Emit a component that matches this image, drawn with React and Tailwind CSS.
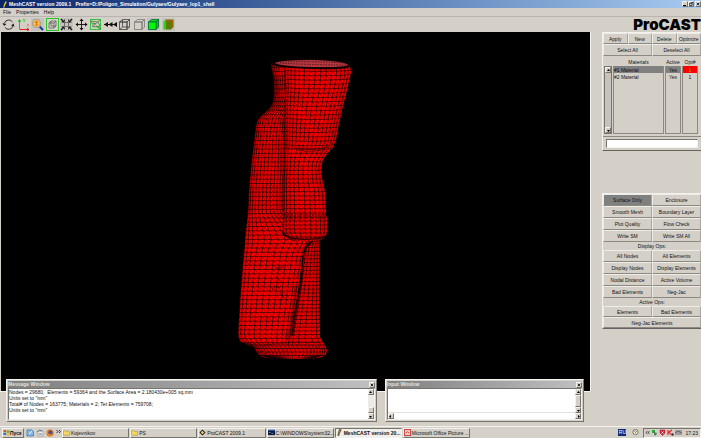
import React, { useState } from 'react';

const raised = 'border border-t-[#f4f2ee] border-l-[#f4f2ee] border-r-[#77746e] border-b-[#77746e] bg-[#d4d0c8]';
const sunken = 'border border-t-[#77746e] border-l-[#77746e] border-r-[#f4f2ee] border-b-[#f4f2ee]';

// Each part is a list of [y, left, right] profiles, top to bottom
const BODY = [
	[63, 271, 296], [70, 272, 296], [80, 274, 296], [92, 274, 294], [102, 273, 292], [109, 269, 290],
	[114, 263, 288], [119, 258, 287], [126, 256, 286], [142, 254, 285], [166, 251, 285], [190, 249, 284],
	[212, 248, 284], [238, 245, 312], [243, 245, 310], [252, 244, 305], [275, 242, 301], [300, 240, 298],
	[318, 239, 295], [335, 238, 293], [341, 240, 292], [347, 252, 290],
];
const HEAD = [
	[66, 286, 350], [72, 285, 351], [86, 286, 348], [110, 285, 342], [128, 285, 338], [140, 285, 336], [149, 285, 332],
];
const FACE = [
	[149, 285, 331], [154, 285, 327], [160, 285, 323], [168, 285, 321], [178, 284, 322], [192, 284, 325], [213, 284, 326],
];
const CHIN = [
	[213, 285, 325], [218, 284, 327], [226, 283, 327], [233, 284, 327], [237, 287, 325], [241, 293, 318],
];
const LEG = [
	[240, 310, 319], [247, 305, 319], [258, 303, 319], [280, 300, 319], [305, 296, 319], [330, 291, 320], [337, 290, 320], [346, 288, 325],
];
const BASE = [
	[345, 250, 325], [347, 254, 326], [351, 256, 327], [354, 258, 326], [357, 262, 322], [359, 276, 310],
];

function profileAt(part, y) {
	for (let i = 1; i < part.length; i++) {
		const [y0, l0, r0] = part[i - 1];
		const [y1, l1, r1] = part[i];
		if (y <= y1) {
			const t = (y - y0) / (y1 - y0);
			return [l0 + (l1 - l0) * t, r0 + (r1 - r0) * t];
		}
	}
	const last = part[part.length - 1];
	return [last[1], last[2]];
}

function outline(part) {
	const left = part.map(([y, l]) => `${l},${y}`);
	const right = part.map(([y, , r]) => `${r},${y}`).reverse();
	return left.concat(right).join(' ');
}

function meshPaths(part, cols, step, sag) {
	const top = part[0][0];
	const bottom = part[part.length - 1][0];
	const count = Math.max(1, Math.round((bottom - top) / step));
	const grid = [];
	for (let r = 0; r <= count; r++) {
		const y = top + ((bottom - top) * r) / count;
		const [l, right] = profileAt(part, y);
		const row = [];
		for (let c = 0; c <= cols; c++) {
			const u = c / cols;
			// columns crowd together towards the silhouette
			const w = 0.5 * u + 0.25 * (1 - Math.cos(Math.PI * u));
			row.push([l + (right - l) * w, y + sag * Math.sin(Math.PI * u)]);
		}
		grid.push(row);
	}
	const line = (a, b) => `M${a[0].toFixed(1)} ${a[1].toFixed(1)}L${b[0].toFixed(1)} ${b[1].toFixed(1)}`;
	let quads = '';
	let diagonals = '';
	for (let r = 0; r < count; r++) {
		for (let c = 0; c < cols; c++) {
			quads += line(grid[r][c], grid[r][c + 1]);
			quads += line(grid[r][c], grid[r + 1][c]);
			diagonals += line(grid[r][c], grid[r + 1][c + 1]);
		}
	}
	return { quads, diagonals };
}

function MeshPart({ part, cols, step, sag = 0, fill = '#ff0000' }) {
	const { quads, diagonals } = meshPaths(part, cols, step, sag);
	return (
		<g fill="none" stroke="#000">
			<polygon points={outline(part)} fill={fill} stroke="none" />
			<path d={quads} strokeWidth="0.7" strokeOpacity="0.85" />
			<path d={diagonals} strokeWidth="0.5" strokeOpacity="0.55" />
		</g>
	);
}

function Model() {
	return (
		<svg viewBox="230 50 130 320" className="absolute left-[229px] top-[18px] h-[320px] w-[130px]" role="img" aria-label="Surface mesh">
			<MeshPart part={BODY} cols={12} step={4.3} />
			<MeshPart part={LEG} cols={6} step={3.8} fill="#f80000" />
			<MeshPart part={HEAD} cols={15} step={4.3} sag={1} />
			<MeshPart part={FACE} cols={10} step={4.3} />
			<MeshPart part={CHIN} cols={10} step={3.8} fill="#f80000" />
			<MeshPart part={BASE} cols={22} step={3.2} fill="#f80000" />
			<g fill="none" stroke="#000">
				<path d="M274 78Q281 92 279 108M283 76Q288 92 285 118M279 110Q284 120 282 135" strokeWidth="0.8" strokeOpacity="0.5" strokeDasharray="1 1" />
				<path d="M284 119Q286 180 283 236" strokeWidth="0.8" strokeOpacity="0.5" />
				<path d="M294 148Q312 151 328 147M298 150Q312 153 326 149" strokeWidth="0.8" strokeOpacity="0.6" />
				<path d="M285 215H326M285 218H326" strokeWidth="1" strokeOpacity="0.6" strokeDasharray="2 1" />
				<path d="M282 232Q287 239 300 239Q315 240 326 236" strokeWidth="1.6" strokeOpacity="0.7" />
				<path d="M313 241Q305 246 303 256Q302 275 299 292" strokeWidth="1.4" />
				<path d="M302 270Q300 290 297 304Q294 320 292 336" strokeWidth="2" strokeOpacity="0.7" />
				<path d="M296 286Q293 310 288 340" strokeWidth="2.4" strokeOpacity="0.25" />
				<path d="M275 268h6l3 -2M272 290l4 -4 4 2M279 302l3 -4 1 -6M276 276l4 6M280 292l4 6" strokeWidth="1" strokeOpacity="0.6" />
				<path d="M247 343Q255 346 262 352M262 346Q290 340 320 343" strokeWidth="0.8" strokeOpacity="0.4" />
			</g>
			<path d="M271 64Q273 60 312 59Q348 60 351 66Q350 70 312 69Q275 68 271 64Z" fill="#150000" />
			<path d="M275 63Q280 60 312 60Q344 61 348 65Q346 67.500 312 67Q280 66 275 63Z" fill="#b83840" />
			<path d="M277 63Q312 65 347 65M280 62Q312 61 343 63" stroke="#401018" strokeWidth="0.9" strokeDasharray="1.500 1.200" fill="none" />
		</svg>
	);
}

function Cube({ face = 'none', side = 'none', top = 'none', stroke = '#444', hidden }) {
	return (
		<g stroke={stroke} strokeWidth="0.8">
			<path d="M1.500 4L4.500 1.500H11.500L9 4Z" fill={top} />
			<path d="M9 4L11.500 1.500V9L9 11.500Z" fill={side} />
			<path d="M1.500 4H9V11.500H1.500Z" fill={face} />
			{hidden && <path d="M4.500 1.500V9H11.500M4.500 9L1.500 11.500" fill="none" />}
		</g>
	);
}

const TOOLS = [
	{
		label: 'Rotate',
		icon: (
			<g fill="none" stroke="#333" strokeWidth="1">
				<path d="M2.500 5A4.500 4.500 0 0 1 10.500 4M11 8A4.500 4.500 0 0 1 3 9.500" />
				<path d="M0.500 5L2 8L4.500 6ZM9 7.500L11.500 5.500L12.500 8.500Z" fill="#222" stroke="none" />
			</g>
		),
	},
	{
		label: 'Axes',
		icon: (
			<g fill="none" strokeWidth="1">
				<path d="M2.500 2V11M1 4L2.500 1.500L4 4" stroke="#18c818" />
				<path d="M2.500 11.500H12M10 10L12 11.500L10 13" stroke="#e02020" />
				<path d="M6 1l1.200 1.500L8.500 1M7.200 2.500V4" stroke="#18c818" strokeWidth="0.8" />
				<path d="M10 6l2 2.500M12 6l-2 2.500" stroke="#e87070" strokeWidth="0.7" />
			</g>
		),
	},
	{
		label: 'Zoom',
		shade: true,
		icon: (
			<g>
				<path d="M8.500 8.500L12 12" stroke="#2038a0" strokeWidth="2" />
				<circle cx="5.500" cy="5.500" r="4" fill="#f8c050" stroke="#a8a098" strokeWidth="1.200" />
				<path d="M5.500 3V8M4 5L5.500 3L7 5M4 6.500L5.500 8L7 6.500" stroke="#e07810" strokeWidth="1" fill="none" />
			</g>
		),
	},
	{
		label: 'Zoom box',
		icon: (
			<g fill="none">
				<rect x="0.500" y="0.500" width="12" height="12" stroke="#28c828" />
				<path d="M3 5H8V10H3ZM3 5L5 3H10V8L8 10M8 5L10 3M5 3V8H10" stroke="#555" strokeWidth="0.7" />
			</g>
		),
	},
	{
		label: 'Fit',
		shade: true,
		icon: (
			<g stroke="#111" fill="none">
				<rect x="4.500" y="4.500" width="4" height="4" stroke="#555" strokeWidth="0.8" />
				<path d="M1 1L4 4M12 1L9 4M1 12L4 9M12 12L9 9" strokeWidth="1.300" />
				<path d="M4.500 1.500L4 4H1.500M8.500 1.500L9 4H11.500M4.500 11.500L4 9H1.500M8.500 11.500L9 9H11.500" strokeWidth="0.900" />
			</g>
		),
	},
	{
		label: 'Pan',
		icon: (
			<g stroke="#111" fill="#111">
				<path d="M6.500 2V11M2 6.500H11" strokeWidth="0.9" />
				<path d="M6.500 0.500L8.500 3H4.500ZM6.500 12.500L8.500 10H4.500ZM0.500 6.500L3 4.500V8.500ZM12.500 6.500L10 4.500V8.500Z" stroke="none" />
			</g>
		),
	},
	{
		label: 'Restore',
		icon: (
			<g fill="none">
				<rect x="1.500" y="1.500" width="10" height="10" stroke="#38c038" />
				<path d="M2 3L9 4L11 8L5 9ZM3 9L11 2" stroke="#507050" strokeWidth="0.8" />
				<path d="M7 8l5 3M4 5l3 1" stroke="#28a028" strokeWidth="1.300" />
			</g>
		),
	},
	{ label: 'Previous', icon: <path d="M0 6.500L4 4V9ZM4.500 6.500L8.500 4V9ZM9 6.500L13 4V9ZM0 6H13V7H0Z" fill="#111" /> },
	{ label: 'Wireframe', icon: <Cube hidden /> },
	{ label: 'Hidden line', icon: <Cube stroke="#777" /> },
	{ label: 'Solid mesh', shade: true, icon: <Cube face="#00f800" side="#00d000" top="#10e010" stroke="#064" /> },
	{
		label: 'Solid',
		shade: true,
		icon: (
			<g>
				<path d="M1.500 4L4 1.500H11.500V9L9 11.500Z" fill="#8a6a00" />
				<path d="M4 4H9V11.500H4Z" fill="#5c7a00" />
				<path d="M1.500 4L4 1.500V4V11.500H1.500Z" fill="#28d800" />
			</g>
		),
	},
];

function Toolbar() {
	return (
		<div className="flex h-[15px] w-[175px] shrink-0 items-center justify-between pl-[2px]">
			{TOOLS.map((tool) => (
				<button key={tool.label} type="button" aria-label={tool.label} className={tool.shade ? 'bg-[#c4c2be]' : ''}>
					<svg viewBox="0 0 13 13" className="block size-[13px]">{tool.icon}</svg>
				</button>
			))}
		</div>
	);
}

function ScrollButton({ dir }) {
	const paths = { up: 'M1 3L2.500 1L4 3Z', down: 'M1 2L2.500 4L4 2Z', left: 'M3 1L1 2.500L3 4Z', right: 'M2 1L4 2.500L2 4Z' };
	return (
		<button type="button" aria-label={`Scroll ${dir}`} className={`${raised} flex size-[6px] shrink-0 items-center justify-center`}>
			<svg viewBox="0 0 5 5" className="size-[5px] shrink-0"><path d={paths[dir]} fill="#000" /></svg>
		</button>
	);
}

function CloseButton({ className = '' }) {
	return (
		<button type="button" aria-label="Close" className={`${raised} flex size-[6px] items-center justify-center ${className}`}>
			<svg viewBox="0 0 5 5" className="size-[4px] shrink-0"><path d="M1 1L4 4M4 1L1 4" stroke="#000" /></svg>
		</button>
	);
}

function OpButton({ children, active, onClick, className = '' }) {
	return (
		<button
			type="button"
			onClick={onClick}
			className={`h-full min-w-0 overflow-hidden whitespace-nowrap border border-l-[#eeece6] border-t-[#eeece6] border-b-[#8c8982] border-r-[#a9a69f] text-center ${active ? 'bg-[#808080]' : 'bg-[#d4d0c8]'} ${className}`}
		>
			{children}
		</button>
	);
}

function MaterialsPanel() {
	const [selected, setSelected] = useState(1);
	const materials = [{ id: 1, name: '#1 Material' }, { id: 2, name: '#2 Material' }];

	return (
		<section className="border border-b-[#66635e] border-l-[#f4f2ee] border-r-0 border-t-[#f4f2ee]">
			<div className="grid h-[11px] grid-cols-4">
				{['Apply', 'New', 'Delete', 'Optimize'].map((name) => <OpButton key={name}>{name}</OpButton>)}
			</div>
			<div className="grid h-[12px] grid-cols-2">
				<OpButton>Select All</OpButton>
				<OpButton>Deselect All</OpButton>
			</div>
			<div className="flex pl-px pr-[2px] pt-[2px]">
				<div className="mt-[8px] flex h-[68px] flex-col justify-between border border-[#77746e] bg-[#c6c3bc]">
					<ScrollButton dir="up" />
					<ScrollButton dir="down" />
				</div>
				<table className="min-w-0 flex-1 table-fixed border-separate border-spacing-x-[1px] border-spacing-y-0">
					<thead>
						<tr className="h-[8px]">
							<th className="p-0 font-normal">Materials</th>
							<th className="w-[16px] p-0 font-normal">Active</th>
							<th className="w-[16px] p-0 font-normal">Opt#</th>
						</tr>
					</thead>
					<tbody>
						{materials.map((material) => {
							const isSelected = material.id === selected;
							return (
								<tr key={material.id} className="h-[7px]" onClick={() => setSelected(material.id)}>
									<td className={`border-x border-[#8c8982] p-0 ${isSelected ? 'bg-[#808080]' : ''}`}>{material.name}</td>
									<td className={`border-x border-[#8c8982] p-0 text-center ${isSelected ? 'bg-[#808080]' : ''}`}>Yes</td>
									<td className={`border-x border-[#8c8982] p-0 text-center ${isSelected ? 'bg-[#ff0000] text-[#c0a000]' : ''}`}>1</td>
								</tr>
							);
						})}
						<tr className="h-[54px]">
							<td className="border border-t-0 border-[#8c8982] p-0" />
							<td className="border border-t-0 border-[#8c8982] p-0" />
							<td className="border border-t-0 border-[#8c8982] p-0" />
						</tr>
					</tbody>
				</table>
			</div>
			<div className="mt-[2px] border-t border-[#8c8982] px-[3px] py-[2px]">
				<input aria-label="Material name" className={`${sunken} block h-[9px] w-full bg-white px-px outline-none`} />
			</div>
		</section>
	);
}

function OperationsPanel() {
	const [mode, setMode] = useState('Surface Only');
	const mesh = ['Surface Only', 'Enclosure', 'Smooth Mesh', 'Boundary Layer', 'Plot Quality', 'Flow Check', 'Write SM', 'Write SM All'];
	const display = ['All Nodes', 'All Elements', 'Display Nodes', 'Display Elements', 'Nodal Distance', 'Active Volume', 'Bad Elements', 'Neg-Jac'];

	return (
		<section className="border border-b-[#66635e] border-l-[#f4f2ee] border-r-0 border-t-[#f4f2ee]">
			<div className="grid auto-rows-[minmax(12px,auto)] grid-cols-2">
				{mesh.map((name) => (
					<OpButton key={name} active={mode === name} onClick={() => setMode(name)}>{name}</OpButton>
				))}
			</div>
			<h2 className="h-[8px] text-center leading-[8px]">Display Ops:</h2>
			<div className="grid auto-rows-[minmax(12px,auto)] grid-cols-2">
				{display.map((name) => <OpButton key={name}>{name}</OpButton>)}
			</div>
			<h2 className="h-[8px] text-center leading-[8px]">Active Ops:</h2>
			<div className="grid auto-rows-[minmax(11px,auto)] grid-cols-2">
				<OpButton>Elements</OpButton>
				<OpButton>Bad Elements</OpButton>
				<OpButton className="col-span-2">Neg-Jac Elements</OpButton>
			</div>
		</section>
	);
}

function ToolWindow({ title, className, children }) {
	return (
		<section className={`${raised} flex h-[43px] min-w-0 flex-col p-px ${className}`}>
			<header className="flex h-[7px] shrink-0 items-center justify-between bg-linear-to-r from-[#808080] to-[#c0c0c0] font-bold leading-[7px] text-[#e4e2dc]">
				<h2>{title}</h2>
				<CloseButton />
			</header>
			{children}
		</section>
	);
}

function MessageWindow() {
	return (
		<ToolWindow title="Message Window" className="flex-[372]">
			<div className={`${sunken} flex min-h-0 flex-1 bg-white`}>
				<div className="flex-1 overflow-hidden whitespace-pre leading-[6px]">
					<p>{'Nodes = 29680,  Elements = 59364 and the Surface Area = 2.180430e+005 sq.mm'}</p>
					<p>Units set to "mm"</p>
					<p>Total# of Nodes = 163775; Materials = 2; Tet Elements = 759708;</p>
					<p>Units set to "mm"</p>
				</div>
				<div className="flex flex-col bg-[#eceae6]">
					<ScrollButton dir="up" />
					<div className="flex-1" />
					<div className={`${raised} h-[6px] w-[6px]`} />
					<ScrollButton dir="down" />
				</div>
			</div>
		</ToolWindow>
	);
}

function InputWindow() {
	return (
		<ToolWindow title="Input Window" className="flex-[198]">
			<div className={`${sunken} flex min-h-0 flex-1 bg-white`}>
				<div className="flex min-w-0 flex-1 flex-col">
					<textarea aria-label="Input" className="min-h-0 w-full flex-1 resize-none overflow-hidden outline-none" />
					<div className="flex border-t border-[#e4e2dc]"><ScrollButton dir="left" /></div>
				</div>
				<div className="flex flex-col bg-[#eceae6]">
					<ScrollButton dir="up" />
					<div className={`${raised} w-[6px] flex-1`} />
					<ScrollButton dir="down" />
					<ScrollButton dir="right" />
				</div>
			</div>
		</ToolWindow>
	);
}

const folder = <path d="M0.500 2H3L4 3H7.500V7H0.500Z" fill="#f8d860" stroke="#b08820" strokeWidth="0.6" />;
const TASKS = [
	{ name: 'Kojevnikov', icon: folder },
	{ name: 'PS', icon: folder },
	{ name: 'ProCAST 2009.1', icon: <g><path d="M4 0.500L7.500 4L4 7.500L0.500 4Z" fill="#181818" /><path d="M4 2L6 4L4 6L2 4Z" fill="#f8c868" /></g> },
	{ name: 'C:\\WINDOWS\\system32...', icon: <g><rect x="0" y="1" width="8" height="6" fill="#0a1a40" /><path d="M0 1.500H8" stroke="#2878d0" /><path d="M1 4h2M4 5h2" stroke="#ccc" strokeWidth="0.7" /></g> },
	{ name: 'MeshCAST version 20...', active: true, icon: <path d="M4 0L6 1L4 5L3 8L2 7L3 3Z" fill="#a89010" stroke="#222" strokeWidth="0.6" /> },
	{ name: 'Microsoft Office Picture ...', icon: <g><rect x="0.500" y="0.500" width="7" height="7" fill="#f4c8c0" stroke="#c83838" /><path d="M2 5L4 3L6 5" stroke="#c83838" fill="none" /></g> },
];

function Taskbar() {
	return (
		<footer className="flex h-[12px] shrink-0 items-center border-t border-[#f4f2ee] bg-[#d4d0c8] pl-[2px]">
			<button type="button" className={`${raised} flex h-[10px] w-[22px] items-center font-bold`}>
				<svg viewBox="0 0 8 8" className="size-[7px] shrink-0">
					<path d="M0.500 1.500Q2 0.500 3.500 1.500V4Q2 3 0.500 4Z" fill="#e84820" />
					<path d="M4.200 1.500Q6 2.500 7.500 1.500V4Q6 5 4.200 4Z" fill="#58b030" />
					<path d="M0.500 4.700Q2 3.700 3.500 4.700V7Q2 6 0.500 7Z" fill="#2868d8" />
					<path d="M4.200 4.700Q6 5.700 7.500 4.700V7Q6 8 4.200 7Z" fill="#f0b818" />
				</svg>
				Пуск
			</button>
			<div className="flex w-[38px] shrink-0 items-center justify-between pl-[2px] pr-px">
				<svg viewBox="0 0 8 8" className="size-[8px]"><path d="M1 1H6L7.500 3V7H1Z" fill="#88b8e8" stroke="#3870b8" strokeWidth="0.7" /><path d="M3 5L6 2" stroke="#fff" /></svg>
				<svg viewBox="0 0 8 8" className="size-[8px]"><rect x="2" y="2" width="5" height="5" fill="#f4f4f4" stroke="#888" strokeWidth="0.6" /><path d="M1 3Q3 0 6 2M3 5H6" stroke="#487890" fill="none" /></svg>
				<svg viewBox="0 0 8 8" className="size-[8px]"><circle cx="4" cy="4" r="3.500" fill="#e06818" /><circle cx="4.500" cy="3.500" r="2" fill="#3858b0" /><path d="M1 2Q1 7 6 6" stroke="#f8a028" fill="none" /></svg>
				<svg viewBox="0 0 5 8" className="h-[8px] w-[5px]"><path d="M0.500 1L2 2.500L0.500 4M3 1L4.500 2.500L3 4" stroke="#111" strokeWidth="0.8" fill="none" /></svg>
			</div>
			<nav className="flex w-[408px] shrink gap-px">
				{TASKS.map((task) => (
					<button
						key={task.name}
						type="button"
						className={`flex h-[10px] min-w-0 flex-1 items-center gap-px whitespace-nowrap ${task.active ? `${sunken} bg-[#f0eeea] font-bold` : raised}`}
					>
						<svg viewBox="0 0 8 8" className="size-[7px] shrink-0">{task.icon}</svg>
						{task.name}
					</button>
				))}
			</nav>
			<div className="ml-auto flex h-[10px] shrink-0 items-center gap-[6px] pr-[4px]">
				<span className="w-[8px] bg-[#102878] text-center leading-[7px] text-white">RU</span>
				<svg viewBox="0 0 8 8" className="size-[7px]"><circle cx="4" cy="3.500" r="3" fill="#f8f8d8" stroke="#444" strokeWidth="0.8" /><path d="M3 3Q4 1 5 3L4 4V5" stroke="#333" strokeWidth="0.8" fill="none" /></svg>
			</div>
			<div className={`${sunken} flex h-[10px] shrink-0 items-center gap-px pl-px`}>
				<svg viewBox="0 0 6 7" className="h-[7px] w-[5px]"><path d="M3 2L1 3.500L3 5M5.500 2L3.500 3.500L5.500 5" stroke="#222" strokeWidth="0.9" fill="none" /></svg>
				<svg viewBox="0 0 7 7" className="size-[7px]"><path d="M1 1H4V4H1Z" fill="#28a828" /><path d="M3 3L6 4L5 6.500L3 6Z" fill="#587868" /></svg>
				<svg viewBox="0 0 7 7" className="size-[7px]"><path d="M1 1H6V4L3.500 6.500L1 4Z" fill="#d82838" stroke="#902028" strokeWidth="0.5" /><path d="M2.500 2.500L4.500 4.500M4.500 2.500L2.500 4.500" stroke="#fff" strokeWidth="0.7" /></svg>
				<svg viewBox="0 0 7 7" className="size-[7px]"><path d="M1 1V6M1.500 3.500L5 1M2 3L4 5.500" stroke="#e02020" strokeWidth="1.200" fill="none" /><circle cx="5.500" cy="5.500" r="1.200" fill="#333" /></svg>
				<svg viewBox="0 0 7 7" className="size-[7px]"><rect x="0" y="1" width="7" height="5" fill="#a0a0a0" /><path d="M0 4L3 2L7 4" stroke="#606060" fill="none" /></svg>
				<time className="pl-[2px] pr-[2px]">17:23</time>
			</div>
		</footer>
	);
}

export default function App() {
	return (
		<div className="flex min-h-screen flex-col bg-[#d4d0c8] font-['Liberation_Sans',Arial,sans-serif] text-[5px] leading-[6px] text-[#111]">
			<header className="flex h-[8px] shrink-0 items-center gap-px bg-linear-to-r from-[#0a246a] to-[#a6caf0] pl-[2px] font-bold text-white">
				<svg viewBox="0 0 6 8" className="h-[7px] w-[6px] shrink-0"><path d="M4 0L5 1L3 5L2 8L1 7L2 3Z" fill="#d8c020" /></svg>
				<h1 className="whitespace-pre">{'MeshCAST version 2009.1   Prefix=D:/Poligon_Simulation/Gulyaev/Gulyaev_lop1_shell'}</h1>
				<div className="ml-auto flex text-black">
					<button type="button" aria-label="Minimize" className={`${raised} size-[6px]`}><svg viewBox="0 0 4 4" className="block size-[4px]"><path d="M0 3.500H3" stroke="#000" /></svg></button>
					<button type="button" aria-label="Restore" className={`${raised} size-[6px]`}><svg viewBox="0 0 4 4" className="block size-[4px]"><path d="M0.500 1.500H3V3.500H0.500ZM1.500 0.500H4V2.500" stroke="#000" strokeWidth="0.6" fill="none" /></svg></button>
					<CloseButton className="ml-px" />
				</div>
			</header>
			<nav className="flex h-[9px] shrink-0 items-center gap-[5px] border-b border-[#b8b5ae] pl-[3px]">
				<button type="button">File</button>
				<button type="button">Properties</button>
				<button type="button">Help</button>
			</nav>

			<div className="flex flex-1">
				<main className="relative flex min-w-0 flex-1 flex-col">
					<Toolbar />
					<div className="relative ml-px flex-1 overflow-hidden bg-black">
						<Model />
					</div>
					<div className="h-[35px] shrink-0 border-t border-[#f4f2ee]" />
					<div className="absolute bottom-[4px] left-[6px] right-[6px] flex gap-[8px]">
						<MessageWindow />
						<InputWindow />
					</div>
				</main>
				<aside className="flex w-[111px] shrink-0 flex-col">
					<div className="flex h-[15px] items-center justify-end font-['Inter',sans-serif] text-[15px] font-black leading-[15px] text-black">ProCAST</div>
					<div className="mb-[35px] flex flex-1 flex-col gap-[42px] border-l border-[#f4f2ee] pl-[11px]">
						<MaterialsPanel />
						<OperationsPanel />
					</div>
				</aside>
			</div>
			<Taskbar />
		</div>
	);
}
